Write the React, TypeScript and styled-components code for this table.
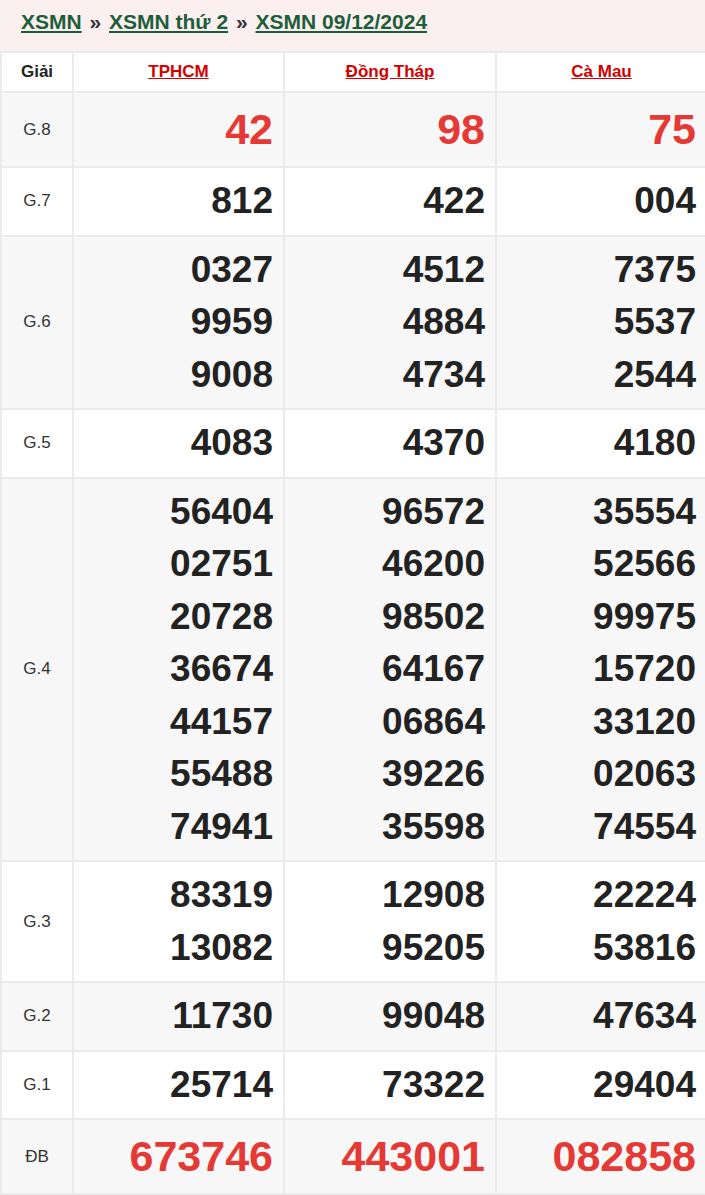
import styled, { createGlobalStyle } from "styled-components";

const GlobalStyle = createGlobalStyle`
  body {
    margin: 0;
    background: #fff;
    font-family: "Liberation Sans", Arial, sans-serif;
    overflow: hidden;
  }
`;

const Breadcrumb = styled.div`
  background: #fcefef;
  padding: 10px 21px 17px;
  line-height: 24px;
  font-size: 21px;
  font-weight: 700;
`;

const Crumb = styled.a`
  color: #1d5e3a;
  text-decoration: underline;
`;

const Sep = styled.span`
  color: #333;
  margin: 0 2px;
`;

const Table = styled.table`
  width: 708px;
  table-layout: fixed;
  border-collapse: collapse;
`;

const Row = styled.tr<{ $alt?: boolean }>`
  background: ${(p) => (p.$alt ? "#f7f7f7" : "#fff")};
`;

const HeadCell = styled.th`
  border: 2px solid #ebebeb;
  height: 38px;
  padding: 0;
  font-size: 17px;
  font-weight: 700;
  color: #222;
  text-align: center;
`;

const Province = styled.a`
  color: #d40000;
  text-decoration: underline;
`;

const Label = styled.td`
  border: 2px solid #ebebeb;
  text-align: center;
  font-size: 17px;
  color: #333;
  padding: 0;
`;

const Numbers = styled.td<{ $big?: boolean }>`
  border: 2px solid #ebebeb;
  text-align: right;
  padding: 7px 10px 7px 0;
  font-weight: 700;
  font-size: ${(p) => (p.$big ? "43px" : "37px")};
  line-height: ${(p) => (p.$big ? "59px" : "52.5px")};
  color: ${(p) => (p.$big ? "#e53935" : "#222")};
`;

const Line = styled.div``;

const provinces = ["TPHCM", "Đồng Tháp", "Cà Mau"];

const prizes: { label: string; big?: boolean; values: string[][] }[] = [
  { label: "G.8", big: true, values: [["42"], ["98"], ["75"]] },
  { label: "G.7", values: [["812"], ["422"], ["004"]] },
  {
    label: "G.6",
    values: [
      ["0327", "9959", "9008"],
      ["4512", "4884", "4734"],
      ["7375", "5537", "2544"],
    ],
  },
  { label: "G.5", values: [["4083"], ["4370"], ["4180"]] },
  {
    label: "G.4",
    values: [
      ["56404", "02751", "20728", "36674", "44157", "55488", "74941"],
      ["96572", "46200", "98502", "64167", "06864", "39226", "35598"],
      ["35554", "52566", "99975", "15720", "33120", "02063", "74554"],
    ],
  },
  {
    label: "G.3",
    values: [
      ["83319", "13082"],
      ["12908", "95205"],
      ["22224", "53816"],
    ],
  },
  { label: "G.2", values: [["11730"], ["99048"], ["47634"]] },
  { label: "G.1", values: [["25714"], ["73322"], ["29404"]] },
  { label: "ĐB", big: true, values: [["673746"], ["443001"], ["082858"]] },
];

export default function App() {
  return (
    <>
      <GlobalStyle />
      <Breadcrumb>
        <Crumb href="#">XSMN</Crumb>
        <Sep> » </Sep>
        <Crumb href="#">XSMN thứ 2</Crumb>
        <Sep> » </Sep>
        <Crumb href="#">XSMN 09/12/2024</Crumb>
      </Breadcrumb>
      <Table>
        <colgroup>
          <col style={{ width: 72 }} />
          <col style={{ width: 211 }} />
          <col style={{ width: 212 }} />
          <col />
        </colgroup>
        <thead>
          <Row>
            <HeadCell>Giải</HeadCell>
            {provinces.map((p) => (
              <HeadCell key={p}>
                <Province href="#">{p}</Province>
              </HeadCell>
            ))}
          </Row>
        </thead>
        <tbody>
          {prizes.map((prize, i) => (
            <Row key={prize.label} $alt={i % 2 === 0}>
              <Label>{prize.label}</Label>
              {prize.values.map((col, j) => (
                <Numbers key={j} $big={prize.big}>
                  {col.map((n, k) => (
                    <Line key={k}>{n}</Line>
                  ))}
                </Numbers>
              ))}
            </Row>
          ))}
        </tbody>
      </Table>
    </>
  );
}
